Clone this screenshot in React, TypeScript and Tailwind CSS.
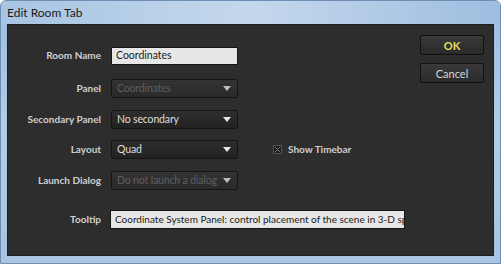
import React from "react";

const font = { fontFamily: 'Lato, "Noto Sans", sans-serif' };

function Arrow({ disabled }: { disabled?: boolean }) {
  return (
    <svg width="8" height="5" viewBox="0 0 8 5" className="shrink-0">
      <path d="M0 0 L8 0 L4 5 Z" fill={disabled ? "#bdbdbd" : "#e8e8e8"} />
    </svg>
  );
}

function Dropdown({ text, disabled }: { text: string; disabled?: boolean }) {
  return (
    <div
      className={`w-[127px] h-[19px] flex items-center justify-between gap-[2px] pl-[5px] pr-[6px] border border-[#141414] rounded-[2px] text-[10.5px] ${
        disabled
          ? "bg-gradient-to-b from-[#333333] to-[#2a2a2a] text-[#5e5e5e]"
          : "bg-gradient-to-b from-[#2e2e2e] to-[#222222] text-[#dedede]"
      }`}
    >
      <span className="whitespace-nowrap leading-[15px] tracking-[-0.15px]">{text}</span>
      <Arrow disabled={disabled} />
    </div>
  );
}

function Label({ children }: { children: React.ReactNode }) {
  return (
    <div className="w-[93px] text-right text-[10px] font-bold text-[#cfcfcf] whitespace-nowrap leading-[15px]">
      {children}
    </div>
  );
}

export default function App() {
  return (
    <div
      style={font}
      className="w-[501px] h-[264px] flex flex-col bg-gradient-to-b from-[#9dbde0] via-[#b4cde6] to-[#a9c3e0] border border-[#6d8fb5] rounded-t-[6px] overflow-hidden"
    >
      <div className="h-[23px] flex items-center pl-[6px] text-[12px] text-[#1b1b1b] bg-gradient-to-r from-[#a7c4e2] via-[#c4d8ec] to-[#9fbde0]">
        Edit Room Tab
      </div>
      <div className="flex-1 mx-[6px] mb-[7px] bg-[#2d2d2d] border border-[#1e1e1e] flex">
        <div className="flex flex-col">
          <div className="flex items-center gap-[10px] mt-[22px] h-[17px]">
            <Label>Room Name</Label>
            <div className="w-[127px] h-[18px] flex items-center pl-[4px] bg-[#e7e7e7] border border-[#151515] text-[10.5px] text-[#1a1a1a] leading-[15px]">
              Coordinates
            </div>
          </div>
          <div className="flex items-center gap-[10px] mt-[15px]">
            <Label>Panel</Label>
            <Dropdown text="Coordinates" disabled />
          </div>
          <div className="flex items-center gap-[10px] mt-[12px]">
            <Label>Secondary Panel</Label>
            <Dropdown text="No secondary" />
          </div>
          <div className="flex items-center gap-[10px] mt-[11px]">
            <Label>Layout</Label>
            <Dropdown text="Quad" />
            <div className="flex items-center gap-[6px] ml-[25px]">
              <div className="w-[9px] h-[9px] bg-[#1c1c1c] border border-[#555555] flex items-center justify-center">
                <svg width="7" height="7" viewBox="0 0 7 7">
                  <path d="M1 1 L6 6 M6 1 L1 6" stroke="#7a7a7a" strokeWidth="1" />
                </svg>
              </div>
              <span className="text-[10px] font-bold text-[#cfcfcf] leading-[15px]">Show Timebar</span>
            </div>
          </div>
          <div className="flex items-center gap-[10px] mt-[12px]">
            <Label>Launch Dialog</Label>
            <Dropdown text="Do not launch a dialog" disabled />
          </div>
          <div className="flex items-center gap-[9px] mt-[20px]">
            <Label>Tooltip</Label>
            <div className="w-[295px] h-[19px] flex items-center pl-[4px] bg-[#e7e7e7] border border-[#151515] text-[10px] text-[#1a1a1a] leading-[15px] whitespace-nowrap overflow-hidden">
              Coordinate System Panel: control placement of the scene in 3-D sp
            </div>
          </div>
        </div>
        <div className="ml-auto mr-[9px] mt-[10px] flex flex-col gap-[8px]">
          <button className="w-[64px] h-[20px] bg-gradient-to-b from-[#3a3a3a] to-[#2a2a2a] border border-[#111111] rounded-[2px] text-[11px] font-bold text-[#e3df5a] leading-none">
            OK
          </button>
          <button className="w-[64px] h-[20px] bg-gradient-to-b from-[#3a3a3a] to-[#2a2a2a] border border-[#111111] rounded-[2px] text-[11px] text-[#d6d6d6] leading-none">
            Cancel
          </button>
        </div>
      </div>
    </div>
  );
}
